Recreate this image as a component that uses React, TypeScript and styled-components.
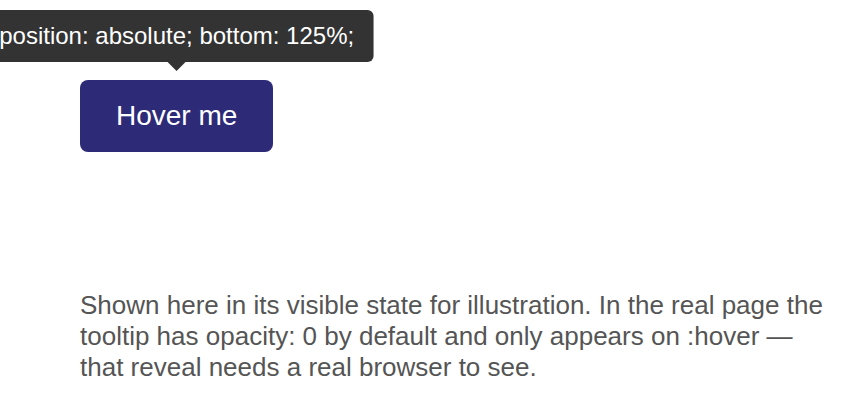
import React from "react";
import styled, { createGlobalStyle } from "styled-components";

const GlobalStyle = createGlobalStyle`
  html, body {
    margin: 0;
    padding: 0;
    background: #ffffff;
  }
  body {
    font-family: "Liberation Sans", Arial, sans-serif;
  }
`;

const Page = styled.main`
  padding: 80px 0 0 80px;
  font-family: "Liberation Sans", Arial, sans-serif;
`;

const TooltipAnchor = styled.div`
  position: relative;
  display: inline-block;
`;

const TriggerButton = styled.button`
  display: block;
  box-sizing: border-box;
  height: 72px;
  padding: 0 36px;
  border: none;
  border-radius: 8px;
  background: #2d2a78;
  color: #ffffff;
  font-family: inherit;
  font-size: 28px;
  line-height: 72px;
  cursor: pointer;
`;

const Tooltip = styled.div`
  position: absolute;
  bottom: 125%;
  left: 50%;
  transform: translateX(-50%);
  padding: 12px 19px;
  border-radius: 6px;
  background: #333333;
  color: #ffffff;
  font-size: 24px;
  line-height: 28px;
  white-space: nowrap;

  &::after {
    content: "";
    position: absolute;
    top: 100%;
    left: 50%;
    margin-left: -9px;
    border-width: 9px 9px 0;
    border-style: solid;
    border-color: #333333 transparent transparent;
  }
`;

const Note = styled.p`
  margin: 138px 0 0;
  max-width: 755px;
  color: #555555;
  font-size: 26px;
  line-height: 31px;
`;

export default function App() {
  return (
    <>
      <GlobalStyle />
      <Page>
        <TooltipAnchor>
          <TriggerButton type="button">Hover me</TriggerButton>
          <Tooltip role="tooltip">position: absolute; bottom: 125%;</Tooltip>
        </TooltipAnchor>
        <Note>
          Shown here in its visible state for illustration. In the real page the
          tooltip has opacity: 0 by default and only appears on :hover — that
          reveal needs a real browser to see.
        </Note>
      </Page>
    </>
  );
}
